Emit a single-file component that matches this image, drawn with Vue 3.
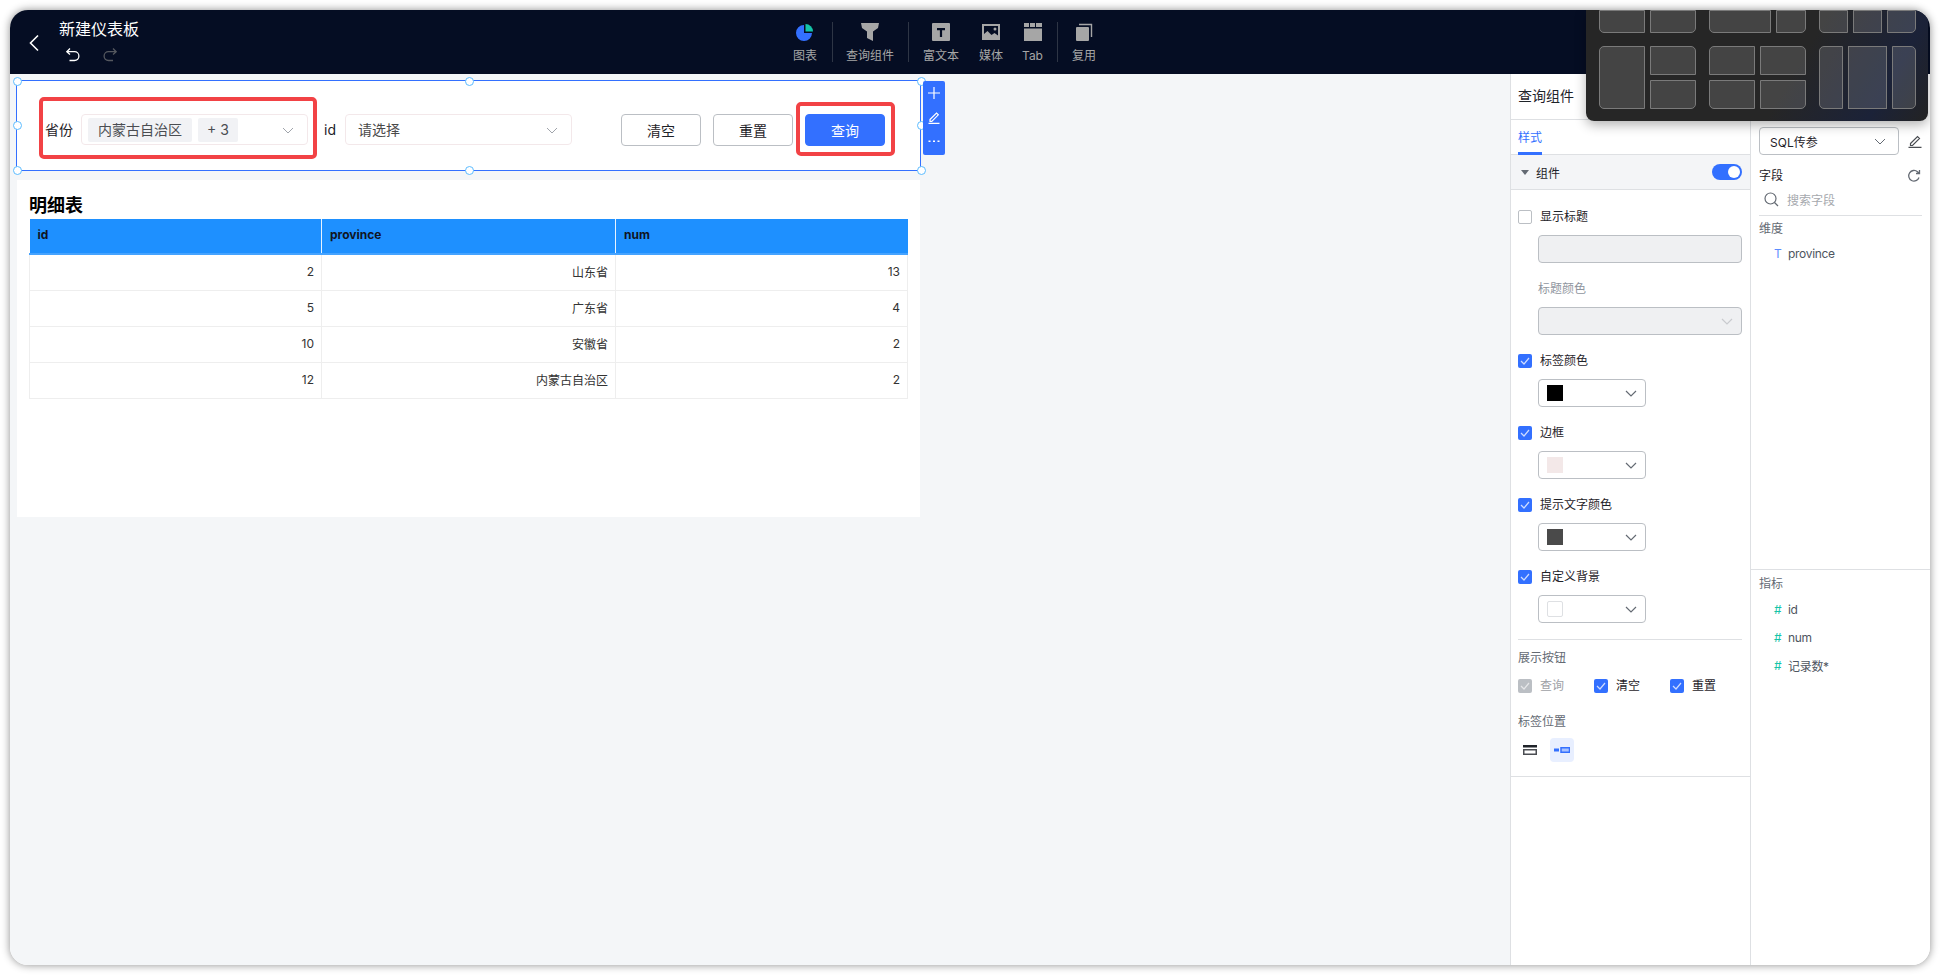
<script setup>
const colorRows = [
  { label: "标签颜色", swatch: "#000000" },
  { label: "边框", swatch: "#f3e8e8" },
  { label: "提示文字颜色", swatch: "#4a4a4a" },
  { label: "自定义背景", swatch: "#ffffff" },
];

const tableRows = [
  { id: 2, province: "山东省", num: 13 },
  { id: 5, province: "广东省", num: 4 },
  { id: 10, province: "安徽省", num: 2 },
  { id: 12, province: "内蒙古自治区", num: 2 },
];

const buttonChecks = [
  { label: "查询", disabled: true },
  { label: "清空", disabled: false },
  { label: "重置", disabled: false },
];

const metrics = ["id", "num", "记录数*"];
const handles = ["tl", "tc", "tr", "ml", "mr", "bl", "bc", "br"];
</script>

<template>
  <div class="page">
    <div class="window">
      <header class="topbar">
        <div class="topbar-left">
          <svg class="back" width="12" height="18" viewBox="0 0 12 18" fill="none">
            <path d="M10 1.5 2.5 9 10 16.5" stroke="#fff" stroke-width="1.6" />
          </svg>
          <div>
            <div class="doc-title">新建仪表板</div>
            <div class="history">
              <svg width="16" height="16" viewBox="0 0 16 16" fill="none" stroke="#fff" stroke-width="1.3">
                <path d="M5 1.5 1.8 4.7 5 7.5M2 4.7h7.5a4 4 0 0 1 0 8.8H4.5" />
              </svg>
              <svg width="16" height="16" viewBox="0 0 16 16" fill="none" stroke="#55585f" stroke-width="1.3">
                <path d="M11 1.5l3.2 3.2L11 7.5M14 4.7H6.5a4 4 0 0 0 0 8.8H11" />
              </svg>
            </div>
          </div>
        </div>

        <nav class="tools">
          <div class="tool w54">
            <svg width="20" height="20" viewBox="0 0 20 20">
              <path d="M9 3a8 8 0 1 0 8 8H9z" fill="#3370ff" />
              <path d="M10.5 2a7.5 7.5 0 0 1 7.5 7.5h-7.500z" fill="#14c4a8" />
            </svg>
            <span>图表</span>
          </div>
          <i class="tool-sep"></i>
          <div class="tool w76">
            <svg width="20" height="20" viewBox="0 0 20 20">
              <path d="M1 1h18l-1 5-5 3.500V19l-6-3V9.500L2 6z" fill="#a6a6a6" />
            </svg>
            <span>查询组件</span>
          </div>
          <i class="tool-sep"></i>
          <div class="tool w66">
            <svg width="20" height="20" viewBox="0 0 20 20">
              <rect x="1" y="1" width="18" height="18" rx="1" fill="#a6a6a6" />
              <path d="M6 6h8v2.200h-2.900V15H8.900V8.200H6z" fill="#050d23" />
            </svg>
            <span>富文本</span>
          </div>
          <div class="tool w34">
            <svg width="20" height="20" viewBox="0 0 20 20">
              <path fill-rule="evenodd" d="M1 2h18v16H1zM3 4v8l3.500-3 4 4 3-2 3.500 2.500V4z" fill="#a6a6a6" />
              <circle cx="14" cy="7" r="1.500" fill="#a6a6a6" />
            </svg>
            <span>媒体</span>
          </div>
          <div class="tool w49">
            <svg width="20" height="20" viewBox="0 0 20 20">
              <path d="M1 1h5v4H1zM7 1h5v4H7zM13 1h6v4h-6zM1 6.500h18V19H1z" fill="#a6a6a6" />
            </svg>
            <span>Tab</span>
          </div>
          <i class="tool-sep"></i>
          <div class="tool w54">
            <svg width="20" height="20" viewBox="0 0 20 20">
              <rect x="2" y="5" width="13" height="14" rx="1" fill="#a6a6a6" />
              <path d="M5 2.500h12.500V15" fill="none" stroke="#a6a6a6" stroke-width="1.400" />
            </svg>
            <span>复用</span>
          </div>
        </nav>
      </header>

      <div class="workspace">
        <main class="canvas">
          <section class="query-box">
            <span class="field-label">省份</span>
            <div class="select">
              <span class="tag">内蒙古自治区</span>
              <span class="tag tag-more">+ 3</span>
              <svg class="chev" width="12" height="7" viewBox="0 0 12 7" fill="none">
                <path d="M1 1l5 5 5-5" stroke="#a0a4ab" stroke-width="1" />
              </svg>
            </div>
            <span class="field-label field-id">id</span>
            <div class="select">
              <span class="placeholder">请选择</span>
              <svg class="chev" width="12" height="7" viewBox="0 0 12 7" fill="none">
                <path d="M1 1l5 5 5-5" stroke="#a0a4ab" stroke-width="1" />
              </svg>
            </div>
            <div class="query-actions">
              <button type="button" class="btn">清空</button>
              <button type="button" class="btn">重置</button>
              <button type="button" class="btn btn-primary">查询</button>
            </div>

            <i class="mark mark-select"></i>
            <i class="mark mark-submit"></i>
            <i v-for="h in handles" :key="h" class="handle" :class="h"></i>

            <div class="box-tools">
              <svg width="14" height="14" viewBox="0 0 14 14" stroke="#fff" stroke-width="1.200">
                <path d="M7 1v12M1 7h12" />
              </svg>
              <svg width="14" height="14" viewBox="0 0 14 14" fill="none" stroke="#fff" stroke-width="1.200">
                <path d="M3 9.500 9.500 3l1.800 1.800L4.800 11.300H3zM1.500 13.400h11" />
              </svg>
              <svg width="14" height="14" viewBox="0 0 14 14" fill="#fff">
                <rect x="1.500" y="6.500" width="2" height="1.500" />
                <rect x="6" y="6.500" width="2" height="1.500" />
                <rect x="10.500" y="6.500" width="2" height="1.500" />
              </svg>
            </div>
          </section>

          <section class="detail-card">
            <h3>明细表</h3>
            <table>
              <colgroup>
                <col style="width: 292px" />
                <col style="width: 294px" />
                <col style="width: 292px" />
              </colgroup>
              <thead>
                <tr>
                  <th>id</th>
                  <th>province</th>
                  <th>num</th>
                </tr>
              </thead>
              <tbody>
                <tr v-for="row in tableRows" :key="row.id">
                  <td>{{ row.id }}</td>
                  <td>{{ row.province }}</td>
                  <td>{{ row.num }}</td>
                </tr>
              </tbody>
            </table>
          </section>
        </main>

        <aside class="style-panel">
          <div class="panel-title">查询组件</div>
          <div class="tabs"><span class="tab-active">样式</span></div>
          <div class="collapse-head">
            <svg width="8" height="5" viewBox="0 0 8 5"><path d="M0 0h8L4 5z" fill="#646a73" /></svg>
            <span>组件</span>
            <i class="switch"></i>
          </div>

          <div class="form">
            <label class="check-row first-check">
              <i class="cb"></i>
              <span>显示标题</span>
            </label>
            <div class="fake-input"></div>
            <div class="sub-label">标题颜色</div>
            <div class="fake-select">
              <svg width="12" height="7" viewBox="0 0 12 7" fill="none">
                <path d="M1 1l5 5 5-5" stroke="#c9cbcf" stroke-width="1.200" />
              </svg>
            </div>

            <template v-for="item in colorRows" :key="item.label">
              <label class="check-row color-check">
                <i class="cb cb-on">
                  <svg width="10" height="8" viewBox="0 0 10 8" fill="none">
                    <path d="M1 4l3 3 5-6" stroke="#cfdcff" stroke-width="1.200" />
                  </svg>
                </i>
                <span>{{ item.label }}</span>
              </label>
              <div class="color-select">
                <i class="swatch" :class="{ 'swatch-line': item.swatch === '#ffffff' }" :style="{ background: item.swatch }"></i>
                <svg width="12" height="7" viewBox="0 0 12 7" fill="none">
                  <path d="M1 1l5 5 5-5" stroke="#646a73" stroke-width="1.200" />
                </svg>
              </div>
            </template>

            <hr class="divider" />
            <div class="group-label">展示按钮</div>
            <div class="btn-checks">
              <label v-for="b in buttonChecks" :key="b.label" class="check-row" :class="{ 'is-disabled': b.disabled }">
                <i class="cb cb-on">
                  <svg width="10" height="8" viewBox="0 0 10 8" fill="none">
                    <path d="M1 4l3 3 5-6" :stroke="b.disabled ? '#e6e7e9' : '#cfdcff'" stroke-width="1.200" />
                  </svg>
                </i>
                <span>{{ b.label }}</span>
              </label>
            </div>
            <div class="group-label pos-label">标签位置</div>
            <div class="pos-icons">
              <span class="pos-btn">
                <svg width="14" height="10" viewBox="0 0 14 10" fill="none">
                  <rect width="14" height="2.500" fill="#1f2329" />
                  <rect x="0.750" y="4.750" width="12.500" height="4.500" stroke="#4a4d52" stroke-width="1.500" />
                </svg>
              </span>
              <span class="pos-btn pos-active">
                <svg width="16" height="6" viewBox="0 0 16 6" fill="none">
                  <rect y="1.500" width="5" height="3" fill="#3370ff" />
                  <rect x="7" y="0.750" width="8.500" height="4.500" fill="#a9c2ff" stroke="#3370ff" stroke-width="1.500" />
                </svg>
              </span>
            </div>
          </div>
        </aside>

        <aside class="field-panel">
          <div class="field-top">
            <div class="source-row">
              <div class="source-select">
                <span>SQL传参</span>
                <svg width="12" height="7" viewBox="0 0 12 7" fill="none">
                  <path d="M1 1l5 5 5-5" stroke="#646a73" stroke-width="1" />
                </svg>
              </div>
              <svg width="14" height="14" viewBox="0 0 14 14" fill="none" stroke="#4a4d52" stroke-width="1.200">
                <path d="M2.500 9.500 9.500 2.500l2 2-7 7H2.500zM0.500 13.400h13" />
              </svg>
            </div>
            <div class="fields-head">
              <span>字段</span>
              <svg width="14" height="14" viewBox="0 0 14 14" fill="none" stroke="#646a73" stroke-width="1.300">
                <path d="M12 8.500A5.300 5.300 0 1 1 10.500 2.800L12.500 4.500M12.500 1v3.500H9" />
              </svg>
            </div>
            <div class="search">
              <svg width="15" height="15" viewBox="0 0 15 15" fill="none" stroke="#646a73" stroke-width="1.200">
                <circle cx="6.500" cy="6.500" r="5.500" />
                <path d="m10.500 10.500 3.500 3.500" />
              </svg>
              <span>搜索字段</span>
            </div>
            <div class="group-name">维度</div>
            <div class="field-item dim-item"><b class="t-icon">T</b><span>province</span></div>
          </div>
          <div class="field-bottom">
            <div class="group-name metric-name">指标</div>
            <div class="metric-list">
              <div v-for="m in metrics" :key="m" class="field-item">
                <b class="hash-icon">#</b><span>{{ m }}</span>
              </div>
            </div>
          </div>
        </aside>
      </div>

      <div class="layout-popup">
        <div class="tpl-row tpl-row-cut">
          <div class="tpl tpl-1"><i></i><i></i></div>
          <div class="tpl tpl-2"><i></i><i></i></div>
          <div class="tpl tpl-3"><i></i><i></i><i></i></div>
        </div>
        <div class="tpl-row">
          <div class="tpl tpl-left"><i class="span-2"></i><i></i><i></i></div>
          <div class="tpl tpl-grid"><i></i><i></i><i></i><i></i></div>
          <div class="tpl tpl-cols"><i></i><i></i><i></i></div>
        </div>
      </div>
    </div>
  </div>
</template>

<style>
html,
body {
  margin: 0;
  background: #fff;
}
</style>

<style scoped>
.page {
  width: 1940px;
  height: 975px;
  padding: 10px;
  box-sizing: border-box;
  font-family: Inter, "Noto Sans CJK SC", sans-serif;
  font-size: 12px;
  color: #1f2329;
  overflow: hidden;
}

.window {
  position: relative;
  width: 1920px;
  height: 955px;
  display: flex;
  flex-direction: column;
  border-radius: 18px;
  background: #fff;
  box-shadow: 0 0 8px rgba(0, 0, 0, 0.45);
  overflow: hidden;
}

.topbar {
  flex: none;
  height: 64px;
  display: flex;
  background: #050d23;
}

.topbar-left {
  width: 768px;
  display: flex;
  padding-left: 18px;
  box-sizing: border-box;
}

.back {
  margin: 24px 19px 0 0;
}

.doc-title {
  margin-top: 9px;
  color: #fff;
  font-size: 16px;
  line-height: 20px;
}

.history {
  margin: 8px 0 0 6px;
  display: flex;
  gap: 21px;
}

.tools {
  display: flex;
  align-items: center;
}

.tool {
  height: 64px;
  display: flex;
  flex-direction: column;
  align-items: center;
  padding-top: 12px;
  box-sizing: border-box;
  color: #a6a6a6;
  font-size: 12px;
  line-height: 16px;
}

.tool span {
  margin-top: 6px;
  white-space: nowrap;
}

.w34 { width: 34px; }
.w49 { width: 49px; }
.w54 { width: 54px; }
.w66 { width: 66px; }
.w76 { width: 76px; }

.tool-sep {
  width: 1px;
  height: 40px;
  margin: 0 -1px 0 0;
  background: #2e3545;
}

.workspace {
  flex: 1;
  min-height: 0;
  display: flex;
}

.canvas {
  flex: 1;
  padding: 6px 0 0 6px;
  background: #f4f6f8;
}

.query-box {
  position: relative;
  width: 905px;
  height: 91px;
  display: flex;
  align-items: flex-start;
  padding: 33px 35px 0 28px;
  box-sizing: border-box;
  background: #fff;
  border: 1px solid #3370ff;
}

.field-label {
  width: 36px;
  flex: none;
  font-size: 14px;
  line-height: 31px;
  color: #1f2329;
}

.field-id {
  width: 21px;
  margin-left: 16px;
  font-size: 14px;
}

.select {
  position: relative;
  width: 227px;
  height: 31px;
  flex: none;
  display: flex;
  align-items: center;
  gap: 6px;
  padding-left: 6px;
  box-sizing: border-box;
  border: 1px solid #f3e8ea;
  border-radius: 4px;
}

.tag {
  height: 24px;
  padding: 0 10px;
  border-radius: 2px;
  background: #f1f2f5;
  color: #4a4d52;
  font-size: 14px;
  line-height: 24px;
}

.tag-more {
  width: 40px;
  padding: 0;
  text-align: center;
}

.placeholder {
  margin-left: 6px;
  color: #4a4a4a;
  font-size: 14px;
  line-height: 24px;
}

.chev {
  position: absolute;
  right: 13px;
  top: 12px;
}

.query-actions {
  margin-left: auto;
  display: flex;
  gap: 12px;
}

.btn {
  width: 80px;
  height: 32px;
  padding: 0;
  border: 1px solid #bbbfc4;
  border-radius: 4px;
  background: #fff;
  color: #1f2329;
  font: inherit;
  font-size: 14px;
}

.btn-primary {
  border-color: #3370ff;
  background: #3370ff;
  color: #fff;
}

.mark {
  position: absolute;
  box-sizing: border-box;
  border: 4px solid #f24245;
  border-radius: 5px;
  pointer-events: none;
}

.mark-select {
  left: 22px;
  top: 16px;
  width: 278px;
  height: 62px;
}

.mark-submit {
  left: 779px;
  top: 21px;
  width: 99px;
  height: 54px;
}

.handle {
  position: absolute;
  width: 7px;
  height: 7px;
  border: 1px solid #5cbcff;
  border-radius: 50%;
  background: #fff;
}

.tl { left: -4.500px; top: -4.500px; }
.tc { left: 447.500px; top: -4.500px; }
.tr { right: -5.500px; top: -4.500px; }
.ml { left: -4.500px; top: 39.500px; }
.mr { right: -5.500px; top: 39.500px; }
.bl { left: -4.500px; bottom: -4.500px; }
.bc { left: 447.500px; bottom: -4.500px; }
.br { right: -5.500px; bottom: -4.500px; }

.box-tools {
  position: absolute;
  left: 906px;
  top: 0;
  width: 22px;
  height: 74px;
  display: flex;
  flex-direction: column;
  align-items: center;
  justify-content: space-around;
  padding: 0 0 2px;
  box-sizing: border-box;
  border-radius: 2px;
  background: #3370ff;
}

.detail-card {
  width: 903px;
  height: 337px;
  margin: 9px 0 0 1px;
  padding: 14px 12px 0 12px;
  box-sizing: border-box;
  background: #fff;
}

.detail-card h3 {
  margin: 0 0 2px;
  font-size: 18px;
  line-height: 23px;
  font-weight: 700;
  color: #000;
}

table {
  width: 878px;
  table-layout: fixed;
  border-collapse: collapse;
}

th {
  height: 31px;
  padding: 0 7px 3px 8px;
  background: #1e90ff;
  border-right: 1px solid #e8f3ff;
  border-bottom: 2px solid #45a3ff;
  text-align: left;
  font-size: 12px;
  font-weight: 700;
  color: #10151f;
}

th:last-child {
  border-right: 0;
}

td {
  height: 33px;
  padding: 0 7px 2px;
  box-sizing: content-box;
  border: 1px solid #eeeeee;
  text-align: right;
  font-size: 12px;
  color: #333;
}

.style-panel {
  flex: none;
  width: 240px;
  border-left: 1px solid #dee0e3;
  box-sizing: border-box;
  background: #fff;
}

.panel-title {
  height: 45px;
  padding-left: 7px;
  border-bottom: 1px solid #dee0e3;
  font-size: 14px;
  line-height: 44px;
}

.tabs {
  height: 34px;
  padding-left: 7px;
  box-sizing: content-box;
  border-bottom: 1px solid #dee0e3;
}

.tab-active {
  display: inline-block;
  height: 32px;
  border-bottom: 3px solid #3370ff;
  color: #3370ff;
  font-size: 12px;
  line-height: 35px;
  box-sizing: content-box;
  margin-bottom: -1px;
}

.collapse-head {
  height: 35px;
  display: flex;
  align-items: center;
  gap: 7px;
  padding: 0 8px 0 10px;
  border-bottom: 1px solid #dee0e3;
  background: #f4f5f7;
  box-sizing: border-box;
}

.switch {
  position: relative;
  width: 30px;
  height: 16px;
  margin-left: auto;
  border-radius: 8px;
  background: #3370ff;
}

.switch::after {
  content: "";
  position: absolute;
  right: 2px;
  top: 2px;
  width: 12px;
  height: 12px;
  border-radius: 50%;
  background: #fff;
}

.form {
  height: 587px;
  padding: 20px 8px 0 7px;
  border-bottom: 1px solid #dee0e3;
  box-sizing: border-box;
}

.check-row {
  display: flex;
  align-items: center;
  height: 14px;
  gap: 8px;
  font-size: 12px;
  line-height: 14px;
}

.cb {
  flex: none;
  width: 14px;
  height: 14px;
  box-sizing: border-box;
  display: flex;
  align-items: center;
  justify-content: center;
  border: 1px solid #bbbfc4;
  border-radius: 2px;
  background: #fff;
}

.cb-on {
  border: 0;
  background: #3370ff;
}

.is-disabled {
  color: #9ea1a6;
}

.is-disabled .cb-on {
  background: #bbbfc4;
}

.fake-input {
  height: 28px;
  margin: 11px 0 0 20px;
  box-sizing: border-box;
  border: 1px solid #bbbfc4;
  border-radius: 4px;
  background: #eff0f2;
}

.sub-label {
  margin: 19px 0 0 20px;
  color: #8f959e;
  font-size: 12px;
  line-height: 14px;
}

.fake-select {
  height: 28px;
  margin: 11px 0 0 20px;
  display: flex;
  align-items: center;
  justify-content: flex-end;
  padding-right: 8px;
  box-sizing: border-box;
  border: 1px solid #bbbfc4;
  border-radius: 4px;
  background: #eff0f2;
}

.color-check {
  margin-top: 19px;
}

.color-select {
  width: 108px;
  height: 28px;
  margin: 11px 0 0 20px;
  display: flex;
  align-items: center;
  justify-content: space-between;
  padding: 0 8px;
  box-sizing: border-box;
  border: 1px solid #bbbfc4;
  border-radius: 4px;
}

.swatch {
  width: 16px;
  height: 16px;
  box-sizing: border-box;
}

.swatch-line {
  border: 1px solid #dee0e3;
  border-radius: 2px;
}

.divider {
  height: 1px;
  margin: 16px 0 0;
  border: 0;
  background: #dee0e3;
}

.group-label {
  margin-top: 11px;
  color: #646a73;
  font-size: 12px;
  line-height: 14px;
}

.btn-checks {
  margin-top: 14px;
  display: grid;
  grid-template-columns: repeat(3, 76px);
}

.pos-label {
  margin-top: 22px;
}

.pos-icons {
  margin-top: 9px;
  display: flex;
  gap: 8px;
}

.pos-btn {
  width: 24px;
  height: 24px;
  display: flex;
  align-items: center;
  justify-content: center;
  border-radius: 4px;
}

.pos-active {
  background: #e8efff;
}

.field-panel {
  flex: none;
  width: 180px;
  display: flex;
  flex-direction: column;
  border-left: 1px solid #dee0e3;
  box-sizing: border-box;
  background: #fff;
}

.field-top {
  height: 496px;
  padding: 53px 8px 0 8px;
  box-sizing: border-box;
  border-bottom: 1px solid #dee0e3;
}

.source-row {
  display: flex;
  align-items: center;
  justify-content: space-between;
}

.source-select {
  width: 140px;
  height: 28px;
  display: flex;
  align-items: center;
  justify-content: space-between;
  padding: 0 12px 0 10px;
  box-sizing: border-box;
  border: 1px solid #bbbfc4;
  border-radius: 4px;
}

.fields-head {
  margin-top: 13px;
  display: flex;
  align-items: center;
  justify-content: space-between;
  line-height: 16px;
  padding-right: 1px;
}

.search {
  height: 31px;
  display: flex;
  align-items: center;
  gap: 8px;
  padding-left: 5px;
  border-bottom: 1px solid #dee0e3;
  color: #a6a9ae;
}

.group-name {
  margin-top: 5px;
  color: #646a73;
  line-height: 16px;
}

.field-item {
  display: flex;
  align-items: center;
  height: 28px;
  padding-left: 15px;
  color: #4e5560;
  letter-spacing: -0.3px;
}

.dim-item {
  margin-top: 2px;
}

.metric-list {
  margin-top: 3px;
}

.metric-name {
  margin-top: 6px;
}

.field-bottom {
  padding: 0 8px;
}

.field-item b {
  width: 14px;
  font-weight: 400;
}

.t-icon {
  color: #5b8cff;
  font-size: 12px;
}

.hash-icon {
  color: #14c4a8;
}

/* template picker floating over the toolbar */
.layout-popup {
  position: absolute;
  left: 1576px;
  top: 0;
  width: 342px;
  height: 111px;
  overflow: hidden;
  box-sizing: border-box;
  border-radius: 0 0 8px 8px;
  padding: 0 13px;
  background: linear-gradient(120deg, #262626 60%, #1b2238 85%, #232323);
  box-shadow: 0 4px 12px rgba(0, 0, 0, 0.3);
}

.tpl-row {
  display: flex;
  margin-top: 13px;
}

.tpl-row-cut {
  height: 23px;
  margin-top: 0;
  align-items: flex-end;
}

.tpl {
  display: grid;
  gap: 4px;
  height: 63px;
  flex: none;
}

.tpl i {
  border: 1px solid #7a7a7a;
  background: rgba(255, 255, 255, 0.14);
}

.tpl-1,
.tpl-2,
.tpl-3 {
  height: 23px;
  grid-template-rows: 23px;
}

.tpl-1,
.tpl-left {
  width: 97px;
  grid-template-columns: 46px 46px;
  gap: 5px;
  margin-right: 13px;
}

.tpl-2 {
  width: 97px;
  grid-template-columns: 62px 30px;
  gap: 5px;
  margin-right: 13px;
}

.tpl-3 {
  width: 97px;
  grid-template-columns: repeat(3, 29px);
  gap: 5px;
}

.tpl-grid {
  width: 97px;
  grid-template-columns: 46px 46px;
  gap: 5px 5px;
  margin-right: 13px;
}

.tpl-cols {
  width: 97px;
  grid-template-columns: 24px 39px 24px;
  gap: 5px;
}

.span-2 {
  grid-row: span 2;
}

.tpl-row > .tpl > i:first-child {
  border-radius: 0 0 0 5px;
}

.tpl-row > .tpl > i:last-child {
  border-radius: 0 0 5px 0;
}

.tpl-left > i:first-child,
.tpl-cols > i:first-child {
  border-radius: 5px 0 0 5px !important;
}

.tpl-cols > i:last-child {
  border-radius: 0 5px 5px 0 !important;
}

.tpl-grid > i:first-child {
  border-radius: 5px 0 0 0 !important;
}

.tpl-grid > i:nth-child(2),
.tpl-left > i:nth-child(2) {
  border-radius: 0 5px 0 0;
}

.tpl-grid > i:nth-child(3) {
  border-radius: 0 0 0 5px;
}
</style>
